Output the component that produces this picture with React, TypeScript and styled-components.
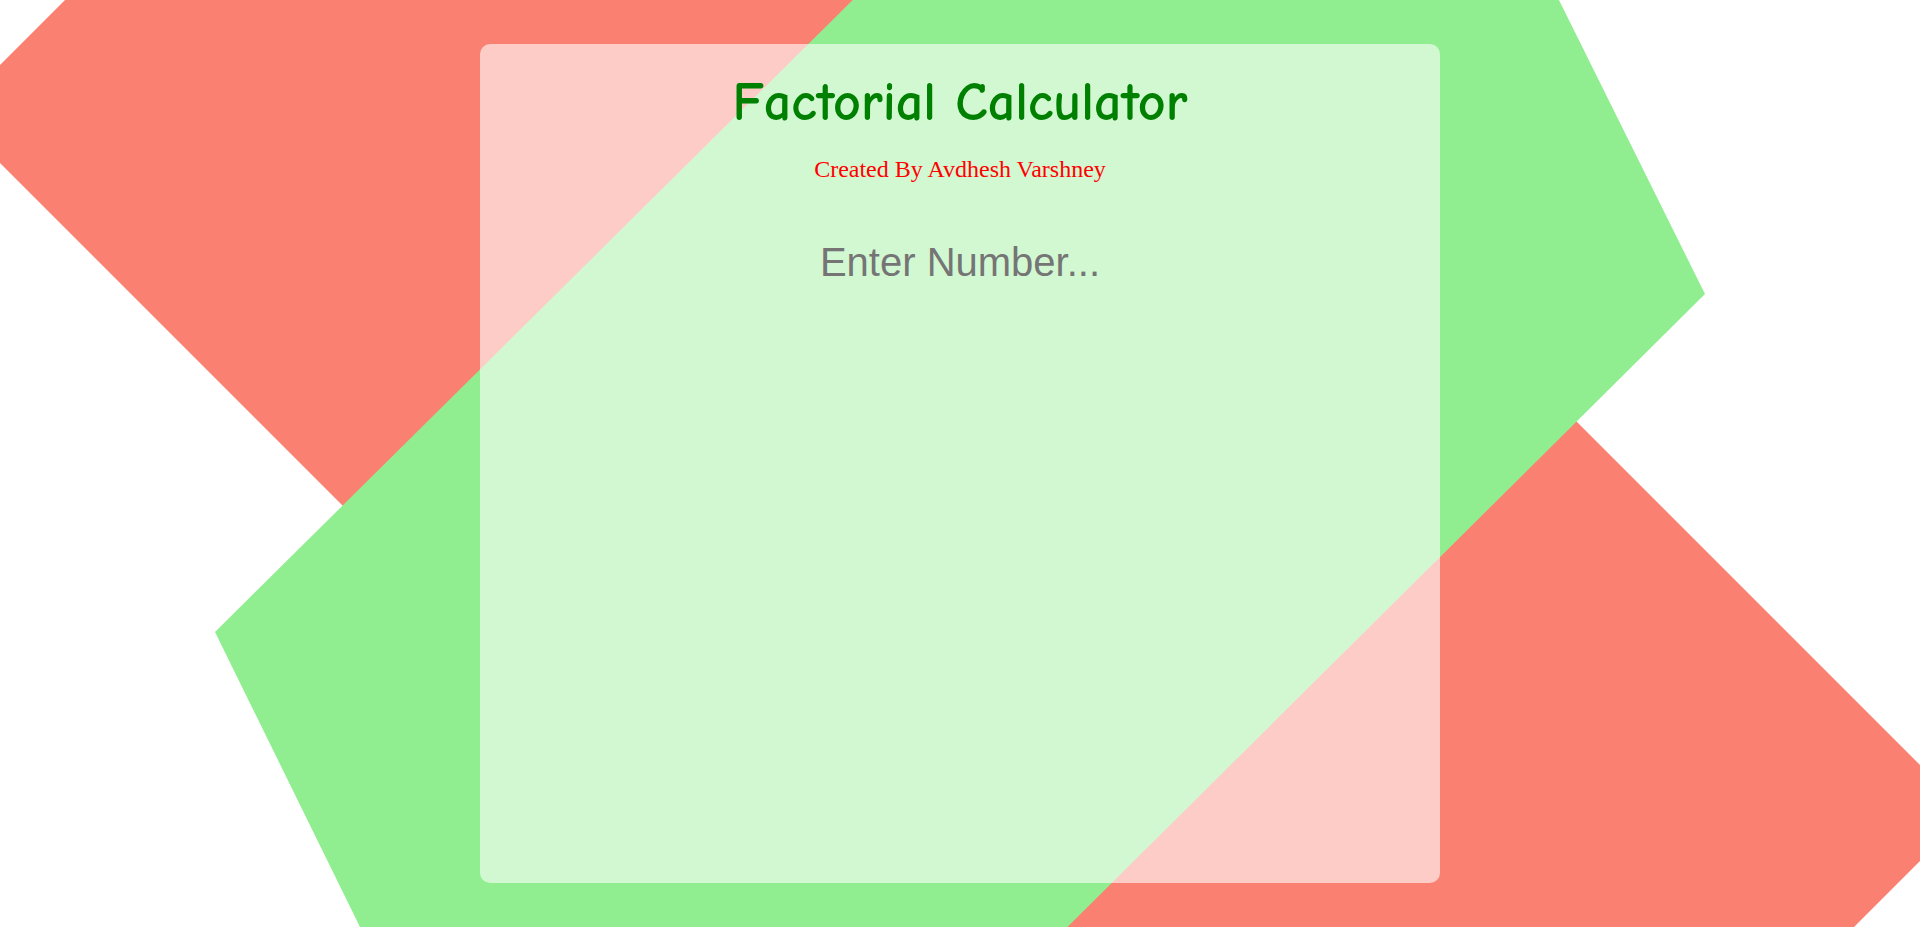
import React from "react";
import styled, { createGlobalStyle } from "styled-components";

const GlobalStyle = createGlobalStyle`
  html, body {
    margin: 0;
    padding: 0;
    height: 100%;
    overflow: hidden;
    background: #ffffff;
  }
  #root {
    height: 100%;
  }
`;

const Page = styled.main`
  position: relative;
  width: 100vw;
  height: 100vh;
  display: flex;
  justify-content: center;
  align-items: flex-start;
  overflow: hidden;
`;

const Backdrop = styled.svg`
  position: absolute;
  inset: 0;
  width: 100%;
  height: 100%;
  z-index: 0;
`;

const Card = styled.section`
  position: relative;
  z-index: 1;
  box-sizing: border-box;
  margin-top: 44px;
  width: 960px;
  height: 839px;
  border-radius: 10px;
  background: rgba(255, 255, 255, 0.6);
  display: flex;
  flex-direction: column;
  align-items: center;
  padding-top: 29px;
`;

const Title = styled.h1`
  margin: 0;
  font-family: "Comic Sans MS", "Comic Neue", "Noto Sans", sans-serif;
  font-weight: 700;
  font-size: 54px;
  line-height: 60px;
  color: #008000;
`;

const Subtitle = styled.p`
  margin: 22px 0 0;
  font-family: "Liberation Serif", "Times New Roman", serif;
  font-size: 24px;
  line-height: 28px;
  color: #ff0000;
`;

const NumberInput = styled.input`
  margin-top: 56px;
  width: 600px;
  padding: 0;
  border: none;
  outline: none;
  background: transparent;
  text-align: center;
  font-family: "Liberation Sans", Arial, sans-serif;
  font-size: 40px;
  line-height: 46px;
  color: #333333;
  -moz-appearance: textfield;
  &::-webkit-inner-spin-button,
  &::-webkit-outer-spin-button {
    -webkit-appearance: none;
    margin: 0;
  }
  &::placeholder {
    color: #757575;
  }
`;

export default function App() {
  return (
    <>
      <GlobalStyle />
      <Page>
        <Backdrop viewBox="0 0 1920 927" preserveAspectRatio="none" aria-hidden="true">
          <polygon points="610,-545 1968,813 1309,1472 -49,114" fill="#fa8072" />
          <polygon points="1326,-469 1705,294 592,1399 215,632" fill="#90ee90" />
        </Backdrop>
        <Card>
          <Title>Factorial Calculator</Title>
          <Subtitle>Created By Avdhesh Varshney</Subtitle>
          <NumberInput type="number" placeholder="Enter Number..." />
        </Card>
      </Page>
    </>
  );
}
